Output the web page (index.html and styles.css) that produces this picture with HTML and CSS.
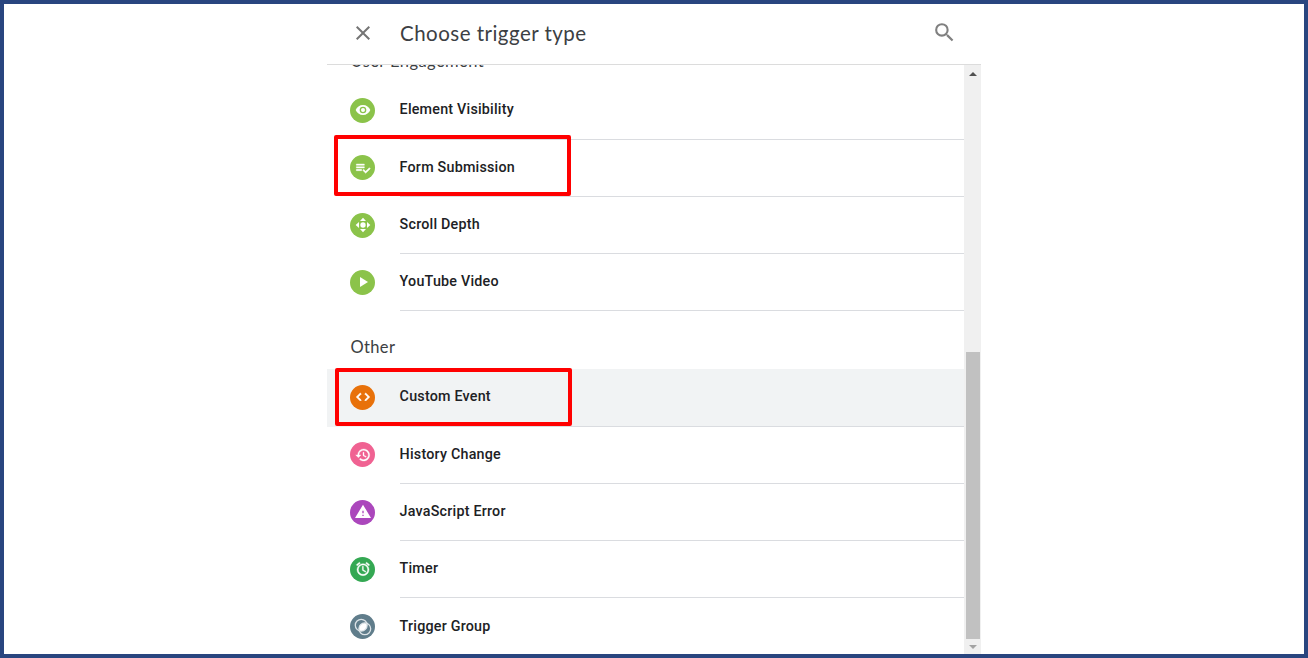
FILE: index.html
```html
<!DOCTYPE html>
<html lang="en">
<head>
<meta charset="utf-8">
<title>Choose trigger type</title>
<link rel="stylesheet" href="styles.css">
</head>
<body>
<main class="frame">
  <section class="panel">
    <header class="header">
      <svg class="close" viewBox="0 0 24 24"><path d="M19 6.410 17.590 5 12 10.590 6.410 5 5 6.410 10.590 12 5 17.590 6.410 19 12 13.410 17.590 19 19 17.590 13.410 12z"/></svg>
      <h1 class="title">Choose trigger type</h1>
      <svg class="search" viewBox="0 0 24 24"><path d="M15.500 14h-.79l-.28-.27A6.470 6.470 0 0 0 16 9.500 6.500 6.500 0 1 0 9.500 16c1.610 0 3.090-.59 4.230-1.570l.27.28v.79l5 4.990L20.490 19l-4.990-5zm-6 0A4.500 4.500 0 1 1 14 9.500 4.490 4.490 0 0 1 9.500 14z"/></svg>
    </header>
    <div class="body">
      <div class="viewport">
        <div class="content">
          <h2 class="group first-group">User Engagement</h2>
          <ul class="list">
            <li class="row"><span class="icon lime"><svg viewBox="0 0 24 24"><path d="M12 4.500C7 4.500 2.730 7.610 1 12c1.730 4.390 6 7.500 11 7.500s9.270-3.110 11-7.500c-1.730-4.390-6-7.500-11-7.500zM12 17a5 5 0 1 1 0-10 5 5 0 0 1 0 10zm0-8a3 3 0 1 0 0 6 3 3 0 0 0 0-6z"/></svg></span><span class="label">Element Visibility</span></li>
            <li class="row"><span class="icon lime"><svg viewBox="0 0 24 24"><path d="M14 10H2v2h12v-2zm0-4H2v2h12V6zM2 16h8v-2H2v2zm19.500-4.500L23 13l-6.990 7-4.510-4.500L13 14l3.010 3 5.490-5.500z" stroke="#fff" stroke-width=".6"/></svg></span><span class="label">Form Submission</span><span class="highlight form-highlight"></span></li>
            <li class="row"><span class="icon lime"><svg viewBox="0 0 24 24"><circle cx="12" cy="12" r="4"/><path d="M12 1 7.500 6h9zM12 23l4.500-5h-9zM1 12l5 4.500v-9zM23 12l-5-4.500v9z"/></svg></span><span class="label">Scroll Depth</span></li>
            <li class="row"><span class="icon lime"><svg viewBox="0 0 24 24"><path d="M7.500 4.500v15L19.500 12z"/></svg></span><span class="label">YouTube Video</span></li>
          </ul>
          <h2 class="group">Other</h2>
          <ul class="list">
            <li class="row hovered"><span class="icon orange"><svg viewBox="0 0 24 24"><path d="M9.400 16.600 4.800 12l4.600-4.600L8 6l-6 6 6 6 1.400-1.400zm5.200 0 4.600-4.600-4.600-4.600L16 6l6 6-6 6-1.400-1.400z" stroke="#fff"/></svg></span><span class="label">Custom Event</span><span class="highlight event-highlight"></span></li>
            <li class="row"><span class="icon pink"><svg viewBox="0 0 24 24"><path d="M13 3a9 9 0 0 0-9 9H1l3.890 3.890.07.14L9 12H6a7 7 0 1 1 2.060 4.940l-1.420 1.420A9 9 0 1 0 13 3zm-1 5v5l4.280 2.540.72-1.210-3.500-2.080V8H12z" stroke="#fff" stroke-width=".5"/></svg></span><span class="label">History Change</span></li>
            <li class="row"><span class="icon purple"><svg viewBox="0 0 24 24"><path d="M0 21h24L12 1 0 21zm13-3h-2v-2h2v2zm0-4h-2v-4h2v4z"/></svg></span><span class="label">JavaScript Error</span></li>
            <li class="row"><span class="icon green"><svg viewBox="0 0 24 24"><path d="m22 5.720-4.600-3.860-1.290 1.530 4.600 3.860L22 5.720zM7.880 3.390 6.600 1.860 2 5.710l1.290 1.530 4.590-3.850zM12.500 8H11v6l4.750 2.850.75-1.230-4-2.370V8zM12 4a9 9 0 1 0 0 18 9 9 0 0 0 0-18zm0 16a7 7 0 1 1 0-14 7 7 0 0 1 0 14z" stroke="#fff" stroke-width=".6"/></svg></span><span class="label">Timer</span></li>
            <li class="row"><span class="icon slate"><svg class="rings" viewBox="0 0 20 20"><path d="M6.400 13.600A5.500 5.500 0 0 1 13.600 6.400 5.500 5.500 0 0 1 6.400 13.600z"/><circle class="ring" cx="8.200" cy="8.200" r="5.900"/><circle class="ring" cx="11.800" cy="11.800" r="5.900"/></svg></span><span class="label">Trigger Group</span></li>
          </ul>
        </div>
      </div>
      <div class="scrollbar">
        <svg class="arrow" viewBox="0 0 8 4"><path d="M0 4h8L4 0z"/></svg>
        <div class="thumb"></div>
        <svg class="arrow arrow-end" viewBox="0 0 8 4"><path d="M0 0h8L4 4z"/></svg>
      </div>
    </div>
  </section>
</main>
</body>
</html>
```
FILE: styles.css
```css
* { box-sizing: border-box; }
body { margin: 0; background: #fff; font-family: Roboto, "Liberation Sans", sans-serif; color: #202124; }
.frame { height: 658px; border: 4px solid #29457f; display: flex; overflow: hidden; }
.panel { width: 654px; margin-left: 323px; display: flex; flex-direction: column; }
.header { height: 61px; flex: none; border-bottom: 1px solid #dcdcdc; display: flex; align-items: center; padding: 0 24px 0 24px; }
.close { width: 24px; height: 24px; fill: #757575; margin-top: -3px; }
.title { flex: 1; margin: -2px 0 0 25px; font: 400 20.500px Lato, sans-serif; letter-spacing: .48px; color: #3c4043; }
.search { width: 25px; height: 25px; fill: #808080; margin-top: -3px; }
.body { flex: 1; min-height: 0; display: flex; }
.viewport { flex: 1; overflow: hidden; }
.content { margin-top: -40.500px; }
.group { height: 57.800px; margin: 0; padding: 25.500px 0 0 23.500px; font: 400 16.500px/20px Lato, sans-serif; letter-spacing: .35px; color: #3c4043; }
.first-group { padding-top: 26px; letter-spacing: .42px; }
.list { list-style: none; margin: 0; padding: 0; }
.row { position: relative; height: 57.300px; display: flex; align-items: center; padding: 0 0 3px 23.400px; }
.row::after { content: ""; position: absolute; left: 73px; right: 0; bottom: 0; height: 1px; background: #dadce0; }
.hovered { background: #f1f3f4; }
.icon { width: 25px; height: 25px; border-radius: 50%; display: flex; align-items: center; justify-content: center; margin-top: 2px; }
.icon svg { width: 16px; height: 16px; fill: #fff; }
.icon .rings { width: 20px; height: 20px; }
.ring { fill: none; stroke: #dce3e7; stroke-width: 1.300px; }
.lime { background: #8bc34a; }
.orange { background: #e8710a; }
.pink { background: #f06292; }
.purple { background: #ab47bc; }
.green { background: #34a853; }
.slate { background: #607d8b; }
.label { margin-left: 24.200px; font-size: 14.300px; line-height: 20px; font-weight: 500; letter-spacing: .22px; }
.highlight { position: absolute; z-index: 1; width: 237px; border: 4px solid #f00; border-radius: 2px; }
.form-highlight { left: 7px; top: -4.500px; height: 61px; }
.event-highlight { left: 8px; top: -1px; height: 58px; }
.scrollbar { width: 17px; background: #f0f0f0; display: flex; flex-direction: column; align-items: center; padding: 7px 0 5px; }
.arrow { width: 8px; height: 4px; fill: #505050; }
.thumb { width: 14px; height: 287px; margin-top: 276px; background: #c1c1c1; }
.arrow-end { fill: #a3a3a3; margin-top: 6px; }
```
